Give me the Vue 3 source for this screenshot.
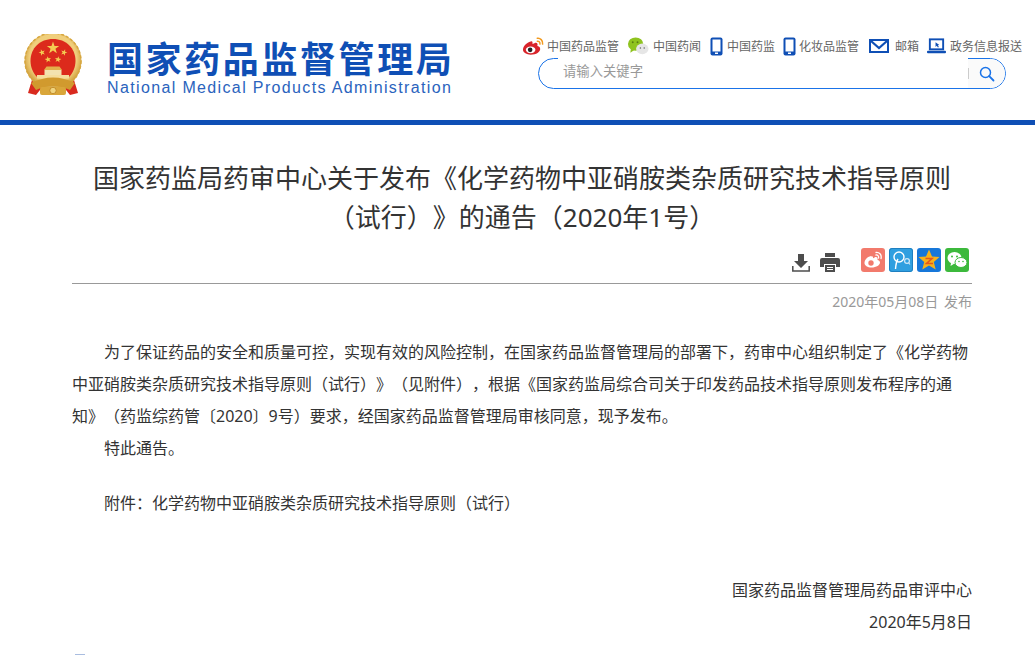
<script setup>
const navItems = [
  { icon: 'weibo', text: '中国药品监管' },
  { icon: 'wechat', text: '中国药闻' },
  { icon: 'phone', text: '中国药监' },
  { icon: 'phone', text: '化妆品监管' },
  { icon: 'mail', text: '邮箱' },
  { icon: 'screen', text: '政务信息报送' }
]

const paragraphs = [
  '为了保证药品的安全和质量可控，实现有效的风险控制，在国家药品监督管理局的部署下，药审中心组织制定了《化学药物中亚硝胺类杂质研究技术指导原则（试行）》（见附件），根据《国家药监局综合司关于印发药品技术指导原则发布程序的通知》（药监综药管〔2020〕9号）要求，经国家药品监督管理局审核同意，现予发布。',
  '特此通告。'
]

// five-pointed star path for the emblem
const star = (cx, cy, r, rot = 0) => {
  let d = ''
  for (let i = 0; i < 10; i++) {
    const rad = i % 2 ? r * 0.4 : r
    const a = ((-90 + rot + i * 36) * Math.PI) / 180
    d += (i ? 'L' : 'M') + (cx + rad * Math.cos(a)).toFixed(2) + ' ' + (cy + rad * Math.sin(a)).toFixed(2)
  }
  return d + 'Z'
}

const stars = [star(30, 14, 6.5), star(19, 18.5, 3.4, -20), star(41, 18.5, 3.4, 20), star(25, 25.5, 3.4, -10), star(35, 25.5, 3.4, 10)]
</script>

<template>
  <div class="page">
    <header class="top">
      <div class="brand">
        <svg class="emblem" width="60" height="64" viewBox="0 0 60 64">
          <defs>
            <radialGradient id="ring" cx="50%" cy="45%" r="55%">
              <stop offset="75%" stop-color="#f0cf7c" />
              <stop offset="100%" stop-color="#c9952e" />
            </radialGradient>
          </defs>
          <path d="M9 46 L5 59 L13 61 L17 56 L20 55 L20 48Z M51 46 L55 59 L47 61 L43 56 L40 55 L40 48Z" fill="#d92a1f" />
          <circle cx="30" cy="27" r="28.500" fill="url(#ring)" />
          <circle cx="30" cy="27" r="28" fill="none" stroke="#d7a73f" stroke-width="1.500" stroke-dasharray="3 2" />
          <path d="M30 5 C43 5 52.500 14 52.500 27 C52.500 33 50 39 46 43 L14 43 C10 39 7.500 33 7.500 27 C7.500 14 17 5 30 5Z" fill="#dc2a1c" />
          <path v-for="d in stars" :key="d" :d="d" fill="#f4cc52" />
          <path d="M21 36 L23.500 32.500 L36.500 32.500 L39 36Z" fill="#e3b04a" />
          <rect x="21.500" y="36" width="17" height="5" fill="#f3e2ae" />
          <rect x="14" y="41" width="32" height="3.500" fill="#f5dd9c" />
          <path d="M8 49 Q30 38 52 49 L47 56 Q30 48 13 56Z" fill="#d19a2e" />
          <rect x="17" y="53" width="26" height="8" rx="2" fill="#d9a63a" />
          <circle cx="30" cy="56.500" r="3.200" fill="#f0d47f" stroke="#b9801f" stroke-width=".8" />
        </svg>
        <div class="brand-text">
          <div class="brand-cn">国家药品监督管理局</div>
          <div class="brand-en">National Medical Products Administration</div>
        </div>
      </div>

      <div class="tools">
        <ul class="nav">
          <li v-for="item in navItems" :key="item.text" class="nav-item" :class="'nav-' + item.icon">
            <svg v-if="item.icon === 'weibo'" width="23" height="20" viewBox="0 0 24 20">
              <path d="M10 5C5 6 1 10 1 14c0 3 4 5 8 5 6 0 10-3 10-6 0-2-2-3-3-3 1-3-1-4-3-3l-2 1c0-2 0-3-1-3z" fill="#d8232a" />
              <ellipse cx="9" cy="14" rx="5" ry="3.600" fill="#fff" />
              <circle cx="8.500" cy="14" r="2.400" fill="#222" />
              <path d="M16 2c3-.5 6 2 5.500 6M16 5c1.500-.3 3 1 2.700 3" fill="none" stroke="#f29a1f" stroke-width="1.600" stroke-linecap="round" />
            </svg>
            <svg v-else-if="item.icon === 'wechat'" width="22" height="20" viewBox="0 0 23 20">
              <ellipse cx="9" cy="8" rx="8" ry="7" fill="#8fc31f" />
              <path d="M4 13 L3.500 17 L8 14Z" fill="#8fc31f" />
              <circle cx="6" cy="6" r="1" fill="#5a7d12" />
              <circle cx="11" cy="6" r="1" fill="#5a7d12" />
              <ellipse cx="16" cy="13" rx="6.500" ry="5.500" fill="#e6e6e6" />
              <circle cx="14" cy="12" r=".8" fill="#666" />
              <circle cx="18" cy="12" r=".8" fill="#666" />
            </svg>
            <svg v-else-if="item.icon === 'phone'" width="13" height="19" viewBox="0 0 13 19">
              <rect x=".5" y=".5" width="12" height="18" rx="2" fill="#0f4fb5" />
              <rect x="2.500" y="2.500" width="8" height="12" fill="#fff" />
              <rect x="5" y="15.500" width="3" height="1.500" fill="#fff" />
            </svg>
            <svg v-else-if="item.icon === 'mail'" width="20" height="14" viewBox="0 0 20 14">
              <rect x="1" y="1" width="18" height="12" fill="none" stroke="#0f4fb5" stroke-width="2" />
              <path d="M2 2 L10 9 L18 2" fill="none" stroke="#0f4fb5" stroke-width="2.200" />
            </svg>
            <svg v-else width="19" height="16" viewBox="0 0 20 16">
              <rect x="3" y="1" width="14" height="10.500" fill="none" stroke="#0f4fb5" stroke-width="2" />
              <rect x="0" y="13" width="20" height="2.500" rx="1" fill="#0f4fb5" />
              <path d="M9 4 L9 9 L10.300 7.800 L11.500 9.500 L12.500 9 L11.400 7.200 L13 7Z" fill="#0f4fb5" />
            </svg>
            <span>{{ item.text }}</span>
          </li>
        </ul>
        <div class="search">
          <div class="search-input">请输入关键字</div>
          <div class="search-btn">
            <i class="search-sep"></i>
            <svg width="16" height="16" viewBox="0 0 16 16">
              <circle cx="6.500" cy="6.500" r="5" fill="none" stroke="#1a73e8" stroke-width="1.500" />
              <path d="M10.200 10.200 L14.500 14.500" stroke="#1a73e8" stroke-width="1.800" stroke-linecap="round" />
            </svg>
          </div>
        </div>
      </div>
    </header>

    <main class="article">
      <h1 class="title">国家药监局药审中心关于发布《化学药物中亚硝胺类杂质研究技术指导原则（试行）》的通告（2020年1号）</h1>

      <div class="actions">
        <svg width="18" height="19" viewBox="0 0 18 19">
          <path d="M6 1h6v7h4l-7 7-7-7h4z" fill="#4d4d4d" />
          <path d="M.8 13v5h16.400v-5" fill="none" stroke="#4d4d4d" stroke-width="1.500" />
        </svg>
        <svg class="print" width="20" height="19" viewBox="0 0 20 19">
          <path d="M5 0h10v4H5zM2 5h16a2 2 0 0 1 2 2v7h-4v-3H4v3H0V7a2 2 0 0 1 2-2z" fill="#4d4d4d" />
          <path d="M5 12h10v7H5z" fill="#4d4d4d" />
          <path d="M7 14h6v1H7zM7 16h6v1H7z" fill="#fff" />
        </svg>
        <div class="shares">
          <svg class="share" width="24" height="24" viewBox="0 0 24 24">
            <rect width="24" height="24" rx="3" fill="#f27a6c" />
            <path d="M10 8C6 9 3.500 12 3.500 15c0 2.500 3 4.500 7 4.500 5 0 8.500-2.500 8.500-5 0-1.500-1.500-2.500-2.500-2.500.8-2.500-1-3.500-3-2.500l-1.500.7c.2-1.700-.5-2.500-2-1.700z" fill="#fff" />
            <circle cx="10" cy="15" r="2.700" fill="#f27a6c" />
            <path d="M15 4.500c3-.5 6 2 5 6M15 7c1.500-.3 3 1 2.500 3" fill="none" stroke="#fff" stroke-width="1.300" stroke-linecap="round" />
          </svg>
          <svg class="share" width="24" height="24" viewBox="0 0 24 24">
            <rect width="24" height="24" rx="3" fill="#2f9fe0" />
            <rect x=".5" y=".5" width="23" height="23" rx="2.500" fill="none" stroke="#1f7fc0" />
            <circle cx="10" cy="9" r="5" fill="none" stroke="#fff" stroke-width="1.400" />
            <path d="M6.500 21 Q7 14 9 11" fill="none" stroke="#fff" stroke-width="1.400" />
            <circle cx="18" cy="13" r="2.400" fill="none" stroke="#cde8f8" stroke-width="1.200" />
            <path d="M19.800 15 L21 16.500" stroke="#cde8f8" stroke-width="1.200" />
          </svg>
          <svg class="share" width="24" height="24" viewBox="0 0 24 24">
            <rect width="24" height="24" rx="3" fill="#1677d9" />
            <path d="M12 1.500 L15 8.500 L22.500 9 L16.800 14 L18.700 21.500 L12 17.500 L5.300 21.500 L7.200 14 L1.500 9 L9 8.500Z" fill="#f7b21a" />
            <path d="M8.500 10.500 H15 L9.500 15.500 H16" fill="none" stroke="#e2571e" stroke-width="1.600" />
          </svg>
          <svg class="share" width="24" height="24" viewBox="0 0 24 24">
            <rect width="24" height="24" rx="3" fill="#3cb93c" />
            <ellipse cx="9.500" cy="10" rx="7" ry="6" fill="#fff" />
            <path d="M6 15 L5.500 18 L9.500 15.500Z" fill="#fff" />
            <ellipse cx="16" cy="14.500" rx="6" ry="5" fill="#fff" stroke="#3cb93c" />
            <circle cx="7" cy="8.500" r="1" fill="#3cb93c" />
            <circle cx="12" cy="8.500" r="1" fill="#3cb93c" />
            <circle cx="14" cy="13.500" r=".8" fill="#3cb93c" />
            <circle cx="18" cy="13.500" r=".8" fill="#3cb93c" />
          </svg>
        </div>
      </div>

      <div class="publish">2020年05月08日 发布</div>

      <div class="body">
        <p v-for="text in paragraphs" :key="text" class="para">{{ text }}</p>
        <p class="para attach">附件：化学药物中亚硝胺类杂质研究技术指导原则（试行）</p>
        <p class="sign first">国家药品监督管理局药品审评中心</p>
        <p class="sign">2020年5月8日</p>
      </div>
      <div class="cut"></div>
    </main>
  </div>
</template>

<style>
html,
body {
  margin: 0;
  background: #fff;
  overflow: hidden;
}
</style>

<style scoped>
.page {
  font-family: "Noto Sans", "Noto Sans CJK SC", sans-serif;
  color: #333;
  text-spacing-trim: space-all;
}

.top {
  display: flex;
  justify-content: space-between;
  height: 120px;
}

.brand {
  display: flex;
  padding: 34px 0 0 23px;
}

.emblem {
  margin-right: 24px;
}

.brand-cn {
  font-family: "Noto Sans CJK SC", sans-serif;
  font-size: 36px;
  font-weight: 700;
  line-height: 40px;
  letter-spacing: 2.6px;
  color: #0f4fb5;
  margin-top: 3px;
  white-space: nowrap;
}

.brand-en {
  font-family: "Liberation Sans", sans-serif;
  font-size: 16px;
  line-height: 18px;
  letter-spacing: 1.36px;
  margin-top: 2px;
  color: #2a63bd;
  white-space: nowrap;
}

.tools {
  padding-top: 34px;
  padding-right: 13px;
}

.nav {
  display: flex;
  list-style: none;
  margin: 0;
  padding: 0;
  height: 24px;
  justify-content: flex-end;
}

.nav-item {
  display: flex;
  align-items: center;
  font-size: 12px;
  color: #666;
  margin-left: 8px;
  white-space: nowrap;
}

.nav-item svg {
  margin-right: 4px;
}

.nav-weibo svg {
  margin-right: 2px;
}

.nav-phone {
  margin-left: 9px;
}

.nav-phone + .nav-phone {
  margin-left: 8px;
}

.nav-phone + .nav-phone svg {
  margin-right: 3px;
}

.nav-mail {
  margin-left: 10px;
}

.nav-mail svg {
  margin-right: 6px;
}

.search {
  display: flex;
  width: 468px;
  height: 31px;
  margin: 0 16px 0 auto;
  box-sizing: border-box;
  border: 1px solid #1a73e8;
  border-radius: 16px;
}

.search-input {
  flex: 1;
  height: 30px;
  margin: -1px 0 0 19px;
  padding-left: 5px;
  background: #fff;
  font-size: 13.33px;
  line-height: 27px;
  color: #999;
}

.search-btn {
  position: relative;
  width: 37px;
  display: flex;
  align-items: center;
  justify-content: center;
  background: #fafafa;
  border-radius: 0 16px 16px 0;
}

.search-sep {
  position: absolute;
  left: 0;
  top: 9px;
  width: 1px;
  height: 11px;
  background: #ccc;
}

.article {
  border-top: 5px solid #0f4fb5;
  padding: 34px 63px 0 72px;
}

.title {
  margin: 0;
  font-size: 26px;
  font-weight: 400;
  line-height: 39px;
  text-align: center;
  color: #333;
}

.actions {
  display: flex;
  align-items: flex-end;
  justify-content: flex-end;
  margin-top: 11px;
  padding-bottom: 11px;
  border-bottom: 1px solid #999;
}

.print {
  margin-left: 10px;
}

.shares {
  display: flex;
  gap: 4px;
  margin: 0 3px 0 21px;
}

.publish {
  margin-top: 8px;
  text-align: right;
  font-size: 14px;
  line-height: 20px;
  word-spacing: 2px;
  color: #999;
}

.body {
  margin-top: 24px;
}

.para {
  margin: 0;
  font-size: 16px;
  line-height: 32px;
  text-indent: 32px;
  color: #333;
}

.attach {
  margin-top: 23px;
}

.sign {
  margin: 0;
  font-size: 16px;
  line-height: 32px;
  text-align: right;
}

.first {
  margin-top: 55px;
}

.cut {
  width: 10px;
  height: 1px;
  margin: 16px 0 0 3px;
  background: #a9bde0;
}
</style>
